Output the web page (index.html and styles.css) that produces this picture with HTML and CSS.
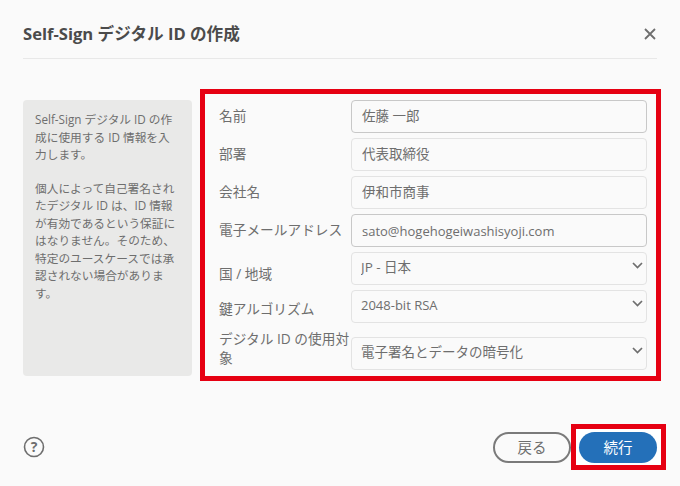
FILE: index.html
```html
<!DOCTYPE html>
<html lang="ja">
<head>
<meta charset="utf-8">
<title>Self-Sign デジタル ID の作成</title>
<link rel="stylesheet" href="styles.css">
</head>
<body>
<div class="dialog">
  <header class="head">
    <h1 class="title">Self-Sign デジタル ID の作成</h1>
    <svg class="close" width="12" height="12" viewBox="0 0 12 12" aria-label="閉じる"><path d="M1 1 L11 11 M11 1 L1 11" stroke="#6e6e6e" stroke-width="1.8" fill="none"/></svg>
  </header>
  <main class="body">
    <aside class="info">
      <p>Self-Sign デジタル ID の作成に使用する ID 情報を入力します。</p>
      <p>個人によって自己署名されたデジタル ID は、ID 情報が有効であるという保証にはなりません。そのため、特定のユースケースでは承認されない場合があります。</p>
    </aside>
    <form class="form">
      <label class="lbl">名前</label>
      <input class="field strong" value="佐藤 一郎">
      <label class="lbl">部署</label>
      <input class="field" value="代表取締役">
      <label class="lbl">会社名</label>
      <input class="field" value="伊和市商事">
      <label class="lbl">電子メールアドレス</label>
      <input class="field strong latin" value="sato@hogehogeiwashisyoji.com">
      <label class="lbl low">国 / 地域</label>
      <div class="sel"><select class="field select"><option>JP - 日本</option></select><svg class="chev" width="11" height="7" viewBox="0 0 11 7"><path d="M1 1 L5.5 5.5 L10 1" stroke="#6e6e6e" stroke-width="1.7" fill="none"/></svg></div>
      <label class="lbl mid">鍵アルゴリズム</label>
      <div class="sel"><select class="field select latin"><option>2048-bit RSA</option></select><svg class="chev" width="11" height="7" viewBox="0 0 11 7"><path d="M1 1 L5.5 5.5 L10 1" stroke="#6e6e6e" stroke-width="1.7" fill="none"/></svg></div>
      <label class="lbl wrap">デジタル ID の使用対象</label>
      <div class="sel end"><select class="field select"><option>電子署名とデータの暗号化</option></select><svg class="chev" width="11" height="7" viewBox="0 0 11 7"><path d="M1 1 L5.5 5.5 L10 1" stroke="#6e6e6e" stroke-width="1.7" fill="none"/></svg></div>
    </form>
  </main>
  <footer class="foot">
    <svg class="help" width="22" height="22" viewBox="0 0 22 22" aria-label="ヘルプ"><circle cx="11" cy="11" r="9.5" stroke="#6e6e6e" stroke-width="1.6" fill="none"/><text x="11" y="15.5" text-anchor="middle" class="helpmark">?</text></svg>
    <div class="actions">
      <button class="btn back" type="button">戻る</button>
      <div class="mark"><button class="btn primary" type="button">続行</button></div>
    </div>
  </footer>
</div>
</body>
</html>
```

FILE: styles.css
```css
* { box-sizing: border-box; }
html, body { margin: 0; height: 100%; }
body {
  background: #fafafa;
  font-family: "Open Sans", "Noto Sans CJK JP", sans-serif;
  color: #6e6e6e;
  overflow: hidden;
}
.dialog { width: 680px; height: 486px; display: flex; flex-direction: column; }
.head {
  margin: 0 23px;
  height: 59px;
  border-bottom: 1px solid #e8e8e8;
  display: flex;
  align-items: center;
  justify-content: space-between;
  padding-top: 21px;
  padding-bottom: 12px;
}
.title { margin: 0; font-size: 16.6px; font-weight: 700; color: #4b4b4b; line-height: 24px; }
.close { margin-right: 1px; }
.body { display: flex; align-items: flex-start; margin-top: 30px; padding-left: 23px; }
.info {
  width: 169px;
  height: 276px;
  margin-top: 11px;
  margin-right: 8px;
  padding: 11px 12px 0 12px;
  background: #e9e9e8;
  border-radius: 4px;
  font-size: 11.7px;
  line-height: 17.5px;
}
.info p { margin: 0 0 16px; }
.form {
  width: 461px;
  height: 292px;
  border: 5px solid #e60012;
  padding: 6px 9px 7px 14px;
  display: grid;
  grid-template-columns: 132px 296px;
  grid-template-rows: repeat(6, 33px) 42px;
  row-gap: 5px;
  align-items: center;
}
.lbl { font-size: 13.7px; line-height: 20px; color: #6e6e6e; white-space: nowrap; padding-bottom: 2px; }
.lbl.low { padding-top: 10px; padding-bottom: 0; }
.lbl.mid { padding-top: 5px; padding-bottom: 0; }
.lbl.wrap { white-space: normal; line-height: 19px; padding-bottom: 3px; }
.field {
  width: 100%;
  height: 33px;
  padding: 0 10px 3px;
  border: 1px solid #e3e3e3;
  border-radius: 4px;
  background: #fafafa;
  font-family: inherit;
  font-size: 13.5px;
  color: #6e6e6e;
  outline: none;
  display: block;
}
.latin { font-size: 13px; padding-bottom: 0; }
.strong { border-color: #c8c8c8; }
.select { appearance: none; -webkit-appearance: none; padding: 0 24px 3px 9px; }
.select.latin { padding-bottom: 3px; }
.sel { position: relative; }
.sel.end { align-self: end; }
.chev { position: absolute; right: 4px; top: 10px; }
.foot {
  margin-top: 43px;
  padding: 0 14px 0 23px;
  display: flex;
  align-items: center;
  justify-content: space-between;
}
.help { display: block; margin-top: -1px; }
.helpmark { font-size: 14px; font-weight: 700; fill: #6e6e6e; font-family: "Open Sans", sans-serif; }
.actions { display: flex; align-items: center; }
.mark { border: 5px solid #e60012; padding: 3px 4px 2px 3px; background: #fff; }
.btn {
  display: block;
  width: 78px;
  height: 31px;
  border-radius: 16px;
  font-family: inherit;
  font-size: 14.5px;
  padding: 0 0 2px;
}
.back { background: #fafafa; border: 2px solid #7a7a7a; color: #6e6e6e; }
.primary { background: #2470b9; border: 0; color: #fff; }
```
